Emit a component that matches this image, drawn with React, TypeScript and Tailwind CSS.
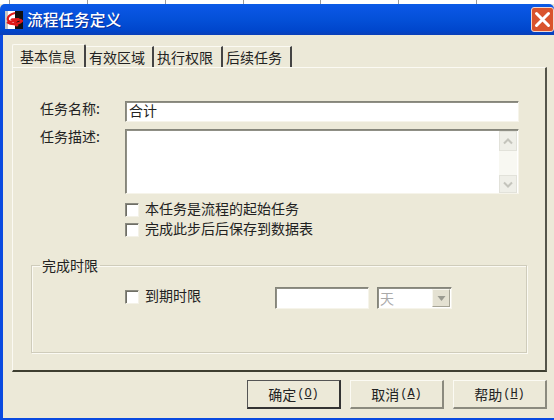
const cjk = "font-['Noto_Sans_CJK_SC','Liberation_Sans',sans-serif]";

function Checkbox({ label, className = "" }: { label: string; className?: string }) {
  return (
    <div className={`flex items-center h-[20px] ${className}`}>
      <span className="block w-[14px] h-[14px] bg-white border border-[#8a8a80] border-r-[#f4f2e8] border-b-[#f4f2e8] shadow-[inset_1px_1px_0_#6f6f66]" />
      <span className="ml-[6px] -mt-[3px] text-[14px] leading-[17px] text-[#222]">{label}</span>
    </div>
  );
}

function Sunken({ className = "", children }: { className?: string; children?: React.ReactNode }) {
  return (
    <div
      className={`bg-white border border-[#85857a] border-r-[#f6f4ea] border-b-[#f6f4ea] shadow-[inset_1px_1px_0_#8f8f85] ${className}`}
    >
      {children}
    </div>
  );
}

function DlgButton({ text, hot, primary }: { text: string; hot: string; primary?: boolean }) {
  return (
    <div
      className={`w-[94px] h-[29px] flex items-center justify-center text-[14px] text-[#222] border ${
        primary
          ? "border-[#f4f2e8] border-r-[#333] border-b-[#333] border-r-2 border-b-2 border-l-[#555] border-t-[#555]"
          : "border-[#fbfaf3] border-r-[#8b8a7e] border-b-[#8b8a7e] border-r-2 border-b-2"
      }`}
    >
      {text}
      <span className="text-[12px] font-['Liberation_Mono',monospace] ml-[1px]">
        (<span className="underline">{hot}</span>)
      </span>
    </div>
  );
}

function Arrow({ up, className = "" }: { up?: boolean; className?: string }) {
  return (
    <div className={`w-[18px] flex items-center justify-center bg-[#efefe8] border border-[#e2e2da] ${className}`}>
      <svg width="10" height="7" viewBox="0 0 10 7" className={up ? "" : "rotate-180"}>
        <path d="M1 5.5 L5 1.5 L9 5.5" fill="none" stroke="#c4c4bc" strokeWidth="2" />
      </svg>
    </div>
  );
}

export default function App() {
  const tabs = ["有效区域", "执行权限", "后续任务"];
  return (
    <div className={`w-[554px] h-[420px] overflow-hidden flex flex-col bg-[#ece9d8] ${cjk}`}>
      {/* sheet behind the dialog */}
      <div className="h-[4px] bg-white flex pl-[9px] shrink-0">
        {[0, 1, 2, 3, 4, 5, 6].map((i) => (
          <div key={i} className="w-[84px] h-full border-l border-[#9a9a9a]" />
        ))}
      </div>

      {/* title bar */}
      <div className="h-[31px] shrink-0 flex items-center pl-[5px] rounded-t-[5px] bg-[linear-gradient(180deg,#0a5be6_0%,#0a56e4_12%,#0450d8_50%,#0046cc_85%,#0a3fb8_100%)]">
        <svg width="18" height="18" viewBox="0 0 18 18" className="shrink-0">
          <rect width="18" height="18" fill="#fff" />
          <rect x="10" width="8" height="18" fill="#111" />
          <rect width="3" height="18" fill="#222" opacity="0.25" />
          <path
            d="M10 2 C5 3 2 6 3 9 C4 12 10 10 12 8 C9 8 7 9 6 8 M2 11 C6 14 13 14 17 10 C15 8 12 9 10 11 C9 13 11 15 13 14"
            fill="none"
            stroke="#e01818"
            strokeWidth="2.2"
          />
        </svg>
        <span className="ml-[4px] text-[15.7px] leading-[31px] font-medium text-white [text-shadow:1px_1px_0_#0a2f9a]">
          流程任务定义
        </span>
        <div className="ml-auto w-[23px] h-[25px] rounded-[3px] border border-[#f0d8d0] bg-[#d9532c] flex items-center justify-center">
          <svg width="17" height="17" viewBox="0 0 17 17">
            <path d="M2.5 2.5 L14.5 14.5 M14.5 2.5 L2.5 14.5" stroke="#fff" strokeWidth="3" strokeLinecap="round" />
          </svg>
        </div>
      </div>

      {/* client area */}
      <div className="flex-1 flex flex-col border-l-[3px] border-b-[2px] border-[#0a4ae0] min-h-0">
        {/* tabs */}
        <div className="flex items-end h-[23px] mt-[9px] ml-[9px] shrink-0 text-[14px] text-[#222]">
          <div className="w-[74px] h-[23px] pl-[7px] leading-[22px] bg-[#ece9d8] border-t border-l border-[#fbfaf3] border-r-2 border-r-[#444] rounded-t-[2px]">
            基本信息
          </div>
          {tabs.map((t, i) => (
            <div
              key={t}
              className={`${i === 0 ? "w-[68px]" : "w-[69px]"} h-[21px] pl-[3px] leading-[20px] border-t border-[#fbfaf3] border-r-2 border-r-[#444]`}
            >
              {t}
            </div>
          ))}
        </div>

        {/* tab page */}
        <div className="w-[535px] h-[305px] ml-[9px] shrink-0 border-t border-l border-[#fbfaf3] border-r-2 border-b-2 border-r-[#55554a] border-b-[#3e3e30] pt-[33px]">
          <div className="flex items-start h-[21px]">
            <span className="w-[112px] pl-[27px] text-[14px] leading-[15px] text-[#222]">任务名称:</span>
            <Sunken className="w-[394px] h-[21px] pl-[3px] text-[14px] leading-[17px] text-[#222]">合计</Sunken>
          </div>
          <div className="flex items-start mt-[7px]">
            <span className="w-[112px] pl-[27px] text-[14px] leading-[15px] text-[#222]">任务描述:</span>
            <Sunken className="w-[394px] h-[65px] flex justify-end pr-[1px] pt-[1px]">
              <div className="w-[18px] h-[62px] flex flex-col justify-between bg-[#f8f8f2]">
                <Arrow up className="h-[20px]" />
                <Arrow className="h-[18px]" />
              </div>
            </Sunken>
          </div>
          <div className="ml-[112px] mt-[6px]">
            <Checkbox label="本任务是流程的起始任务" />
            <Checkbox label="完成此步后后保存到数据表" />
          </div>

          {/* deadline group */}
          <fieldset className="ml-[18px] mt-[16px] w-[496px] h-[97px] border border-[#cfccbb] shadow-[1px_1px_0_#fbfaf3,inset_1px_1px_0_#fbfaf3] px-[8px]">
            <legend className="px-[2px] text-[14px] leading-[18px] text-[#222]">完成时限</legend>
            <div className="flex items-start mt-[13px] ml-[85px]">
              <Checkbox label="到期时限" className="w-[150px]" />
              <Sunken className="w-[94px] h-[22px]" />
              <Sunken className="w-[75px] h-[22px] ml-[8px] flex justify-between pl-[2px] pr-[1px] pt-[1px] text-[14px] leading-[18px] text-[#aaa]">
                天
                <div className="w-[18px] h-[18px] bg-[#e4e1d2] border border-[#f7f6ee] border-r-[#a5a395] border-b-[#a5a395] flex items-center justify-center">
                  <svg width="9" height="5" viewBox="0 0 9 5">
                    <path d="M0.5 0 L8.5 0 L4.5 5 Z" fill="#9a9a90" />
                  </svg>
                </div>
              </Sunken>
            </div>
          </fieldset>
        </div>

        {/* dialog buttons */}
        <div className="flex justify-end gap-[9px] pr-[7px] mt-[8px] shrink-0">
          <DlgButton text="确定" hot="O" primary />
          <DlgButton text="取消" hot="A" />
          <DlgButton text="帮助" hot="H" />
        </div>
      </div>
    </div>
  );
}
